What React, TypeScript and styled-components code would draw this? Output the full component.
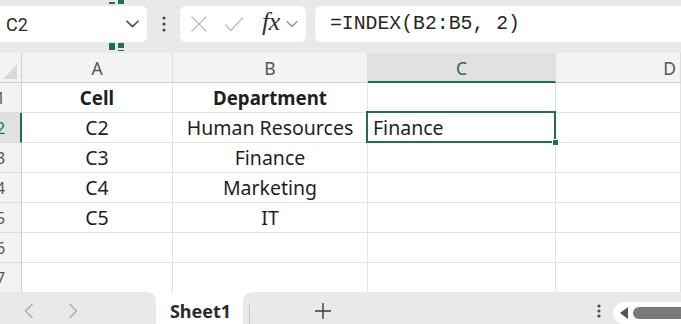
import React from "react";
import styled, { createGlobalStyle, css } from "styled-components";

const Global = createGlobalStyle`
  html, body { margin: 0; padding: 0; background: #ffffff; }
  body { width: 681px; height: 324px; overflow: hidden; }
  * { box-sizing: border-box; }
`;

const Page = styled.div`
  position: relative;
  width: 681px;
  height: 324px;
  display: flex;
  flex-direction: column;
  overflow: hidden;
  font-family: "Noto Sans", "Liberation Sans", sans-serif;
`;

const TopBar = styled.div`
  position: relative;
  height: 53px;
  flex: none;
  background: #e8e9eb;
  display: flex;
  align-items: flex-start;
  padding-top: 6px;
`;

const Panel = styled.div<{ $w?: number; $grow?: boolean; $left?: number }>`
  height: 36px;
  background: #ffffff;
  border-radius: 6px;
  display: flex;
  align-items: center;
  ${(p) => (p.$w ? css`width: ${p.$w}px;` : "")}
  ${(p) => (p.$grow ? css`flex: 1;` : "")}
  ${(p) => (p.$left !== undefined ? css`margin-left: ${p.$left}px;` : "")}
`;

const NameBox = styled(Panel)`
  border-top-left-radius: 0;
  border-bottom-left-radius: 0;
  padding: 0 8px 0 6px;
  justify-content: space-between;
`;

const NameText = styled.span`
  font-family: "Roboto", "Noto Sans", sans-serif;
  font-size: 18px;
  color: #2b2b2b;
`;

const Kebab = styled.div`
  width: 33px;
  height: 36px;
  display: flex;
  align-items: center;
  justify-content: center;
`;

const FxGroup = styled(Panel)`
  padding: 0 0 0 10px;
`;

const IconSlot = styled.div<{ $w: number }>`
  width: ${(p) => p.$w}px;
  height: 36px;
  display: flex;
  align-items: center;
  justify-content: center;
`;

const FxText = styled.span`
  font-family: "Liberation Serif", serif;
  font-style: italic;
  font-size: 26px;
  color: #333333;
  letter-spacing: -0.5px;
  margin-top: -4px;
`;

const FormulaBox = styled(Panel)`
  margin-left: 9px;
  border-top-right-radius: 0;
  border-bottom-right-radius: 0;
  padding-left: 15px;
`;

const FormulaText = styled.span`
  font-family: "Liberation Mono", "DejaVu Sans Mono", monospace;
  font-size: 19.8px;
  color: #262626;
  margin-top: -1px;
`;

const Handle = styled.svg`
  position: absolute;
  left: 109px;
  top: 0;
`;

const Sheet = styled.div`
  display: grid;
  grid-template-columns: 22px 151px 195px 188px 1fr;
  grid-auto-rows: 30px;
  flex: 1;
  min-height: 0;
  overflow: hidden;
  background: #ffffff;
`;

const Corner = styled.div`
  background: #f3f3f3;
  border-right: 1px solid #cfcfcf;
  border-bottom: 1px solid #cfcfcf;
  display: flex;
  align-items: flex-end;
  justify-content: flex-end;
  padding: 0 4px 3px 0;
`;

const ColHead = styled.div<{ $active?: boolean }>`
  background: ${(p) => (p.$active ? "#e1e1e1" : "#f3f3f3")};
  border-right: 1px solid #dcdcdc;
  border-bottom: ${(p) => (p.$active ? "2px solid #1e7145" : "1px solid #cfcfcf")};
  color: ${(p) => (p.$active ? "#1e7145" : "#555555")};
  font-family: "Noto Sans", sans-serif;
  font-size: 17.5px;
  display: flex;
  align-items: center;
  justify-content: center;
  padding-top: ${(p) => (p.$active ? "1px" : "0")};
`;

const ColHeadD = styled(ColHead)`
  justify-content: flex-end;
  padding-right: 4px;
`;

const RowHead = styled.div<{ $active?: boolean }>`
  background: ${(p) => (p.$active ? "#e1e1e1" : "#f3f3f3")};
  border-right: ${(p) => (p.$active ? "2px solid #1e7145" : "1px solid #cfcfcf")};
  border-bottom: 1px solid #dcdcdc;
  color: ${(p) => (p.$active ? "#1e7145" : "#555555")};
  font-size: 16px;
  display: flex;
  align-items: center;
  overflow: hidden;
  text-indent: -4px;
`;

const Cell = styled.div<{ $bold?: boolean; $align?: "left" | "center" }>`
  border-right: 1px solid #e1e1e1;
  border-bottom: 1px solid #e1e1e1;
  display: flex;
  align-items: center;
  justify-content: ${(p) => (p.$align === "left" ? "flex-start" : "center")};
  padding: 0 5px;
  font-family: "Noto Sans", sans-serif;
  font-size: ${(p) => (p.$bold ? "18.7px" : "19.5px")};
  font-weight: ${(p) => (p.$bold ? 700 : 400)};
  color: #1f1f1f;
  white-space: nowrap;
  position: relative;
`;

const Selected = styled.div`
  position: absolute;
  left: -2px;
  top: -2px;
  right: -1px;
  bottom: -1px;
  border: 2px solid #1e7145;
  pointer-events: none;
  z-index: 2;
`;

const FillHandle = styled.div`
  position: absolute;
  right: -5px;
  bottom: -5px;
  width: 7px;
  height: 7px;
  background: #1e7145;
  border: 1px solid #ffffff;
`;

const BottomBar = styled.div`
  height: 32px;
  flex: none;
  display: flex;
  background: #ffffff;
`;

const NavPanel = styled.div`
  width: 156px;
  background: #e8e9eb;
  border-top-right-radius: 9px;
  display: flex;
  align-items: center;
  padding-left: 24px;
  gap: 34px;
  padding-top: 6px;
`;

const Tab = styled.div`
  width: 87px;
  display: flex;
  align-items: center;
  justify-content: center;
  font-family: "Noto Sans", sans-serif;
  font-weight: 700;
  font-size: 18px;
  color: #2a2a2a;
  padding-top: 5px;
  padding-left: 2px;
`;

const RestPanel = styled.div`
  flex: 1;
  background: #e8e9eb;
  border-top-left-radius: 9px;
  display: flex;
  align-items: center;
  padding-top: 6px;
`;

const Sep = styled.div`
  width: 1px;
  height: 20px;
  background: #c4c4c4;
  margin-left: 6px;
  margin-top: 8px;
`;

const PlusSlot = styled.div`
  width: 20px;
  margin-left: 63px;
  display: flex;
  align-items: center;
  justify-content: center;
`;

const Spacer = styled.div`
  flex: 1;
`;

const ScrollPill = styled.div`
  width: 70px;
  height: 22px;
  margin-right: -2px;
  margin-left: 12px;
  background: #ffffff;
  border-radius: 11px 0 0 11px;
  display: flex;
  align-items: center;
  padding-left: 6px;
  gap: 4px;
  margin-top: 4px;
`;

const Thumb = styled.div`
  flex: 1;
  height: 12px;
  background: #7a7a7a;
  border-radius: 6px 0 0 6px;
`;

const Chevron = ({ color = "#555", w = 13 }: { color?: string; w?: number }) => (
  <svg width={w} height={8} viewBox="0 0 13 8">
    <path d="M1 1.2 L6.5 6.6 L12 1.2" fill="none" stroke={color} strokeWidth="1.6" strokeLinecap="round" strokeLinejoin="round" />
  </svg>
);

const Dots = ({ h = 16 }: { h?: number }) => (
  <svg width="4" height={h} viewBox={`0 0 4 ${h}`}>
    <circle cx="2" cy="2" r="1.6" fill="#4a4a4a" />
    <circle cx="2" cy={h / 2} r="1.6" fill="#4a4a4a" />
    <circle cx="2" cy={h - 2} r="1.6" fill="#4a4a4a" />
  </svg>
);

const rows: [string, string][] = [
  ["C2", "Human Resources"],
  ["C3", "Finance"],
  ["C4", "Marketing"],
  ["C5", "IT"],
  ["", ""],
  ["", ""],
];

export default function App() {
  return (
    <Page>
      <Global />
      <TopBar>
        <NameBox $w={147}>
          <NameText>C2</NameText>
          <Chevron color="#4d4d4d" />
        </NameBox>
        <Kebab>
          <Dots />
        </Kebab>
        <FxGroup $w={126}>
          <IconSlot $w={18}>
            <svg width="18" height="18" viewBox="0 0 18 18">
              <path d="M1.5 1.5 L16.5 16.5 M16.5 1.5 L1.5 16.5" stroke="#bdbdbd" strokeWidth="1.4" fill="none" />
            </svg>
          </IconSlot>
          <IconSlot $w={52}>
            <svg width="20" height="16" viewBox="0 0 20 16">
              <path d="M1 8.5 L7 14.5 L19 1.5" stroke="#bdbdbd" strokeWidth="1.4" fill="none" />
            </svg>
          </IconSlot>
          <IconSlot $w={22}>
            <FxText>fx</FxText>
          </IconSlot>
          <IconSlot $w={20}>
            <Chevron color="#9a9a9a" w={12} />
          </IconSlot>
        </FxGroup>
        <FormulaBox $grow>
          <FormulaText>=INDEX(B2:B5, 2)</FormulaText>
        </FormulaBox>
        <Handle width="16" height="54" viewBox="0 0 16 54">
          <rect x="0" y="2" width="6" height="2" fill="#1e7145" />
          <rect x="9" y="0" width="6" height="4" fill="#1e7145" />
          <rect x="0" y="43" width="6" height="7" fill="#1e7145" />
          <rect x="9" y="43" width="6" height="5" fill="#1e7145" />
          <rect x="9" y="50" width="6" height="1" fill="#1e7145" />
        </Handle>
      </TopBar>
      <Sheet>
        <Corner>
          <svg width="14" height="14" viewBox="0 0 14 14">
            <path d="M14 0 L14 14 L0 14 Z" fill="#d9d9d9" />
          </svg>
        </Corner>
        <ColHead>A</ColHead>
        <ColHead>B</ColHead>
        <ColHead $active>C</ColHead>
        <ColHeadD>D</ColHeadD>

        <RowHead>1</RowHead>
        <Cell $bold>Cell</Cell>
        <Cell $bold>Department</Cell>
        <Cell />
        <Cell />
        {rows.map(([a, b], i) => (
          <React.Fragment key={i}>
            <RowHead $active={i === 0}>{i + 2}</RowHead>
            <Cell>{a}</Cell>
            <Cell>{b}</Cell>
            <Cell $align="left">
              {i === 0 ? "Finance" : ""}
              {i === 0 && (
                <Selected>
                  <FillHandle />
                </Selected>
              )}
            </Cell>
            <Cell />
          </React.Fragment>
        ))}
        <RowHead>8</RowHead>
        <Cell />
        <Cell />
        <Cell />
        <Cell />
      </Sheet>
      <BottomBar>
        <NavPanel>
          <svg width="10" height="16" viewBox="0 0 10 16">
            <path d="M8.5 1 L1.5 8 L8.5 15" stroke="#a8a8a8" strokeWidth="1.4" fill="none" />
          </svg>
          <svg width="10" height="16" viewBox="0 0 10 16">
            <path d="M1.5 1 L8.5 8 L1.5 15" stroke="#a8a8a8" strokeWidth="1.4" fill="none" />
          </svg>
        </NavPanel>
        <Tab>Sheet1</Tab>
        <RestPanel>
          <Sep />
          <PlusSlot>
            <svg width="18" height="18" viewBox="0 0 18 18">
              <path d="M9 1 V17 M1 9 H17" stroke="#3a3a3a" strokeWidth="1.4" fill="none" />
            </svg>
          </PlusSlot>
          <Spacer />
          <Dots h={14} />
          <ScrollPill>
            <svg width="10" height="12" viewBox="0 0 10 12">
              <path d="M9 0 L9 12 L1 6 Z" fill="#555" />
            </svg>
            <Thumb />
          </ScrollPill>
        </RestPanel>
      </BottomBar>
    </Page>
  );
}
